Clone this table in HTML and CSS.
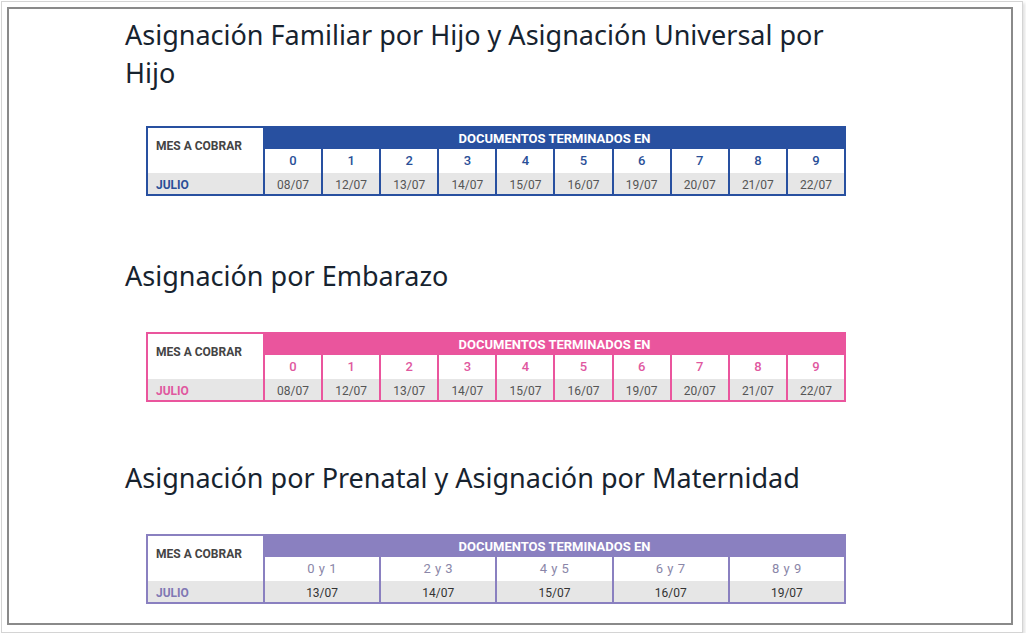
FILE: index.html
```html
<!DOCTYPE html>
<html lang="es">
<head>
<meta charset="utf-8">
<title>Calendario de pagos</title>
<link rel="stylesheet" href="styles.css">
</head>
<body>
<div class="outer">
  <div class="frame">
    <section class="block block-first">
      <h2 class="title">Asignación Familiar por Hijo y Asignación Universal por Hijo</h2>
      <div class="cal cal-blue cols-10">
        <div class="mes">MES A COBRAR</div>
        <div class="head">DOCUMENTOS TERMINADOS EN</div>
        <div class="num">0</div><div class="num">1</div><div class="num">2</div><div class="num">3</div><div class="num">4</div>
        <div class="num">5</div><div class="num">6</div><div class="num">7</div><div class="num">8</div><div class="num">9</div>
        <div class="month">JULIO</div>
        <div class="date">08/07</div><div class="date">12/07</div><div class="date">13/07</div><div class="date">14/07</div><div class="date">15/07</div>
        <div class="date">16/07</div><div class="date">19/07</div><div class="date">20/07</div><div class="date">21/07</div><div class="date">22/07</div>
      </div>
    </section>
    <section class="block block-second">
      <h2 class="title">Asignación por Embarazo</h2>
      <div class="cal cal-pink cols-10">
        <div class="mes">MES A COBRAR</div>
        <div class="head">DOCUMENTOS TERMINADOS EN</div>
        <div class="num">0</div><div class="num">1</div><div class="num">2</div><div class="num">3</div><div class="num">4</div>
        <div class="num">5</div><div class="num">6</div><div class="num">7</div><div class="num">8</div><div class="num">9</div>
        <div class="month">JULIO</div>
        <div class="date">08/07</div><div class="date">12/07</div><div class="date">13/07</div><div class="date">14/07</div><div class="date">15/07</div>
        <div class="date">16/07</div><div class="date">19/07</div><div class="date">20/07</div><div class="date">21/07</div><div class="date">22/07</div>
      </div>
    </section>
    <section class="block block-third">
      <h2 class="title">Asignación por Prenatal y Asignación por Maternidad</h2>
      <div class="cal cal-purple cols-5">
        <div class="mes">MES A COBRAR</div>
        <div class="head">DOCUMENTOS TERMINADOS EN</div>
        <div class="num">0 y 1</div><div class="num">2 y 3</div><div class="num">4 y 5</div><div class="num">6 y 7</div><div class="num">8 y 9</div>
        <div class="month">JULIO</div>
        <div class="date">13/07</div><div class="date">14/07</div><div class="date">15/07</div><div class="date">16/07</div><div class="date">19/07</div>
      </div>
    </section>
  </div>
</div>
</body>
</html>
```

FILE: styles.css
```css
* { box-sizing: border-box; }
html, body { margin: 0; padding: 0; background: #ffffff; }
body { padding: 1px 0 0 1px; }

.outer {
  width: 1022px;
  height: 632px;
  border: 1px solid #d4d4d4;
  background: #fff;
  box-shadow: 2px 2px 3px rgba(0,0,0,0.12);
  padding: 5px 0 0 5px;
}

.frame {
  width: 1006px;
  height: 618px;
  border: 2px solid #8a8a8a;
  background: #fff;
  padding: 0 0 0 116px;
  overflow: hidden;
}

.title {
  margin: 0;
  font-family: "Noto Sans", "Open Sans", sans-serif;
  font-weight: 400;
  font-size: 27px;
  line-height: 38px;
  color: #17232f;
  width: 730px;
}

.block-first { padding-top: 7px; }
.block-first .cal { margin-top: 34px; }
.block-second { margin-top: 61px; }
.block-second .cal { margin-top: 37px; }
.block-third { margin-top: 57px; }
.block-third .cal { margin-top: 37px; }

.cal {
  --c: #2850a0;
  margin-left: 21px;
  width: 700px;
  display: grid;
  grid-template-rows: 21px 24px 21px;
  column-gap: 2px;
  border: 2px solid var(--c);
  background: var(--c);
  font-family: Roboto, "Liberation Sans", sans-serif;
}
.cols-10 { grid-template-columns: 115px repeat(10, 1fr); }
.cols-5 { grid-template-columns: 115px repeat(5, 1fr); }

.cal-blue { --c: #2850a0; --t: #2a4f98; }
.cal-pink { --c: #ea559d; --t: #e0589f; }
.cal-purple { --c: #8a80c0; --t: #8078b4; }

.mes {
  grid-row: 1 / span 2;
  background: #fff;
  color: #444;
  font-weight: 700;
  font-size: 12px;
  padding: 11px 0 0 8px;
}
.head {
  grid-column: 2 / -1;
  background: var(--c);
  color: #fff;
  font-weight: 700;
  font-size: 13px;
  text-align: center;
  line-height: 22px;
}
.num {
  background: #fff;
  color: var(--t);
  font-size: 13px;
  font-weight: 500;
  text-align: center;
  line-height: 24px;
}
.cal-purple .num { font-weight: 400; color: #8a86a8; letter-spacing: 0.5px; }
.month {
  background: #e6e6e6;
  color: var(--t);
  font-weight: 700;
  font-size: 12px;
  padding: 2px 0 0 8px;
  line-height: 20px;
}
.date {
  background: #e6e6e6;
  color: #555;
  font-size: 12px;
  font-weight: 400;
  text-align: center;
  padding-top: 2px;
  line-height: 20px;
}
.cal-purple .date { color: #333; }
```
